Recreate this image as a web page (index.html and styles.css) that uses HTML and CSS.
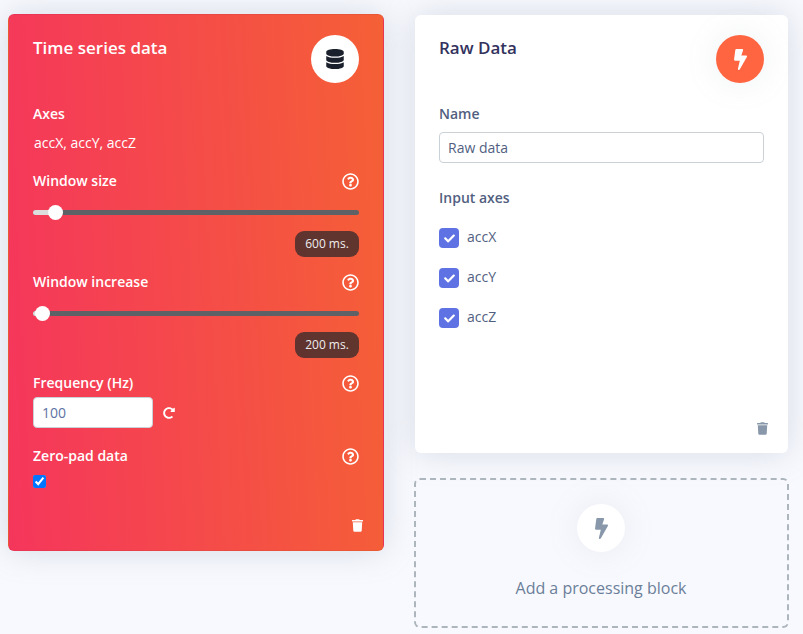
FILE: index.html
```html
<!DOCTYPE html>
<html lang="en">
<head>
    <meta charset="UTF-8">
    <meta name="viewport" content="width=device-width, initial-scale=1.0">
    <title>Impulse design</title>
    <link rel="stylesheet" href="styles.css">
</head>
<body>
    <svg class="icon-defs" width="0" height="0">
        <symbol id="i-database" viewBox="0 0 448 512"><path d="M448 73.143v45.714C448 159.143 347.667 192 224 192S0 159.143 0 118.857V73.143C0 32.857 100.333 0 224 0s224 32.857 224 73.143zM448 176v102.857C448 319.143 347.667 352 224 352S0 319.143 0 278.857V176c48.125 33.143 136.208 48.572 224 48.572S399.874 209.143 448 176zm0 160v102.857C448 479.143 347.667 512 224 512S0 479.143 0 438.857V336c48.125 33.143 136.208 48.572 224 48.572S399.874 369.143 448 336z"/></symbol>
        <symbol id="i-bolt" viewBox="0 0 320 512"><path d="M296 160H180.6l42.6-129.8C227.2 15 215.7 0 200 0H56C44 0 33.8 8.9 32.2 20.8l-32 240C-1.7 275.2 9.5 288 24 288h118.7L96.6 482.5c-3.6 15.2 8 29.5 23.3 29.5 8.4 0 16.4-4.4 20.8-12l176-304c9.3-15.9-2.2-36-20.7-36z"/></symbol>
        <symbol id="i-trash" viewBox="0 0 448 512"><path d="M432 32H312l-9.4-18.7A24 24 0 0 0 281.1 0H166.8a23.72 23.72 0 0 0-21.4 13.3L136 32H16A16 16 0 0 0 0 48v32a16 16 0 0 0 16 16h416a16 16 0 0 0 16-16V48a16 16 0 0 0-16-16zM53.2 467a48 48 0 0 0 47.9 45h245.8a48 48 0 0 0 47.9-45L416 128H32z"/></symbol>
        <symbol id="i-help" viewBox="0 0 512 512"><path d="M256 8C119.043 8 8 119.083 8 256c0 136.997 111.043 248 248 248s248-111.003 248-248C504 119.083 392.957 8 256 8zm0 448c-110.532 0-200-89.431-200-200 0-110.495 89.472-200 200-200 110.491 0 200 89.471 200 200 0 110.53-89.431 200-200 200zm107.244-255.2c0 67.052-72.421 68.084-72.421 92.863V300c0 6.627-5.373 12-12 12h-45.647c-6.627 0-12-5.373-12-12v-8.659c0-35.745 27.1-50.034 47.579-61.516 17.561-9.845 28.324-16.541 28.324-29.579 0-17.246-21.999-28.693-39.784-28.693-23.189 0-33.894 10.977-48.942 29.969-4.057 5.12-11.46 6.071-16.666 2.124l-27.824-21.098c-5.107-3.872-6.251-11.066-2.644-16.363C184.846 131.491 214.94 112 261.794 112c49.071 0 101.45 38.304 101.45 88.8zM298 368c0 23.159-18.841 42-42 42s-42-18.841-42-42 18.841-42 42-42 42 18.841 42 42z"/></symbol>
        <symbol id="i-redo" viewBox="0 0 512 512"><path d="M256.455 8c66.269.119 126.437 26.233 170.859 68.685l35.715-35.715C478.149 25.851 504 36.559 504 57.941V192c0 13.255-10.745 24-24 24H345.941c-21.382 0-32.09-25.851-16.971-40.971l41.75-41.75c-30.864-28.899-70.801-44.907-113.23-45.273-92.398-.798-170.283 73.977-169.484 169.442C88.764 348.009 162.184 424 256 424c41.127 0 79.997-14.678 110.629-41.556 4.743-4.161 11.906-3.908 16.368.553l39.662 39.662c4.872 4.872 4.631 12.815-.482 17.433C378.202 479.813 319.926 504 256 504 119.034 504 8.001 392.967 8 256.002 7.999 119.193 119.646 7.755 256.455 8z"/></symbol>
        <symbol id="i-check" viewBox="0 0 512 512"><path d="M173.898 439.404l-166.4-166.4c-9.997-9.997-9.997-26.206 0-36.204l36.203-36.204c9.997-9.998 26.207-9.998 36.204 0L192 312.69 432.095 72.596c9.997-9.997 26.207-9.997 36.204 0l36.203 36.204c9.997 9.997 9.997 26.206 0 36.204l-294.4 294.401c-9.998 9.997-26.207 9.997-36.204-.001z"/></symbol>
    </svg>

    <div class="page">
        <section class="card card-time">
            <div class="card-head">
                <h2>Time series data</h2>
                <span class="round round-white"><svg class="ic-db"><use href="#i-database"/></svg></span>
            </div>

            <div class="label axes-label">Axes</div>
            <div class="axes-value">accX, accY, accZ</div>

            <div class="label-row row-size">
                <span class="label">Window size</span>
                <svg class="ic-help"><use href="#i-help"/></svg>
            </div>
            <div class="slider">
                <div class="slider-fill fill-size"></div>
                <div class="slider-knob"></div>
            </div>
            <div class="badge-row"><span class="badge">600 ms.</span></div>

            <div class="label-row row-increase">
                <span class="label">Window increase</span>
                <svg class="ic-help"><use href="#i-help"/></svg>
            </div>
            <div class="slider">
                <div class="slider-fill fill-increase"></div>
                <div class="slider-knob"></div>
            </div>
            <div class="badge-row"><span class="badge">200 ms.</span></div>

            <div class="label-row row-increase">
                <span class="label">Frequency (Hz)</span>
                <svg class="ic-help"><use href="#i-help"/></svg>
            </div>
            <div class="freq-row">
                <input class="input input-freq" type="text" value="100">
                <svg class="ic-redo"><use href="#i-redo"/></svg>
            </div>

            <div class="label-row row-zero">
                <span class="label">Zero-pad data</span>
                <svg class="ic-help"><use href="#i-help"/></svg>
            </div>
            <input class="zero-check" type="checkbox" checked>

            <div class="card-foot">
                <svg class="ic-trash"><use href="#i-trash"/></svg>
            </div>
        </section>

        <div class="right-col">
            <section class="card card-raw">
                <div class="card-head">
                    <h2>Raw Data</h2>
                    <span class="round round-orange"><svg class="ic-bolt"><use href="#i-bolt"/></svg></span>
                </div>

                <label class="label name-label" for="blockName">Name</label>
                <input class="input input-name" id="blockName" type="text" value="Raw data">

                <div class="label input-axes">Input axes</div>
                <div class="check-list">
                    <div class="check-item"><span class="check-box"><svg><use href="#i-check"/></svg></span>accX</div>
                    <div class="check-item"><span class="check-box"><svg><use href="#i-check"/></svg></span>accY</div>
                    <div class="check-item"><span class="check-box"><svg><use href="#i-check"/></svg></span>accZ</div>
                </div>

                <div class="card-foot">
                    <svg class="ic-trash ic-trash-grey"><use href="#i-trash"/></svg>
                </div>
            </section>

            <section class="add-block">
                <span class="round round-white round-add"><svg class="ic-bolt"><use href="#i-bolt"/></svg></span>
                <div class="add-text">Add a processing block</div>
            </section>
        </div>
    </div>
</body>
</html>
```

FILE: styles.css
```css
* {
    box-sizing: border-box;
}
html, body {
    height: 100%;
    overflow: hidden;
}
body {
    margin: 0;
    background-color: #f8f9fe;
    font-family: "Open Sans", sans-serif;
    font-size: 14px;
    line-height: 21px;
    color: #525f7f;
}
.icon-defs {
    position: absolute;
}
.page {
    display: grid;
    grid-template-columns: 376px 373px;
    column-gap: 31px;
    align-items: start;
    padding: 14px 0 0 8px;
}
.card {
    display: flex;
    flex-direction: column;
    border-radius: 6px;
    box-shadow: 0 0 32px 0 rgba(136,152,170,0.3);
}
.card-time {
    height: 537px;
    padding: 20px 24px 0;
    border: 1px solid rgba(0,0,0,0.05);
    background: linear-gradient(87deg, #f5365c, #f56036);
    color: #fff;
}
.card-raw {
    height: 438px;
    padding: 20px 24px 0;
    background-color: #fff;
}
.right-col {
    display: flex;
    flex-direction: column;
    gap: 25px;
    padding-top: 1px;
}
.card-head {
    display: flex;
    justify-content: space-between;
    height: 48px;
}
h2 {
    margin: 1px 0 0;
    font-size: 17px;
    line-height: 24px;
    font-weight: 600;
    color: #32325d;
}
.card-time h2 {
    color: #fff;
}
.round {
    display: flex;
    align-items: center;
    justify-content: center;
    flex: none;
    width: 48px;
    height: 48px;
    border-radius: 50%;
}
.round-white {
    background-color: #fff;
}
.round-orange {
    background-color: #ff6540;
    box-shadow: 0 0 32px 0 rgba(136,152,170,0.15);
    fill: #fff;
}
.round-add {
    box-shadow: 0 0 32px 0 rgba(136,152,170,0.15);
    fill: #8898aa;
}
.ic-db {
    width: 18px;
    height: 20px;
    fill: #1a202c;
}
.ic-bolt {
    width: 13px;
    height: 21px;
}
.ic-help {
    width: 17px;
    height: 17px;
    fill: #fff;
}
.ic-redo {
    width: 12px;
    height: 12px;
    margin-left: 10px;
    fill: #fff;
}
.ic-trash {
    width: 11px;
    height: 13px;
    margin-right: -4px;
    fill: #fff;
}
.ic-trash-grey {
    fill: #8898aa;
}
.label {
    font-weight: 600;
}
.label-row .label {
    margin: -1px 0 1px;
}
.axes-label {
    margin-top: 20px;
}
.axes-value {
    margin-top: 8px;
    padding-left: 1px;
}
.label-row {
    display: flex;
    justify-content: space-between;
    align-items: center;
    height: 21px;
}
.row-size {
    margin-top: 18px;
}
.row-increase {
    margin-top: 15px;
}
.row-zero {
    margin-top: 18px;
}
.slider {
    position: relative;
    height: 5px;
    margin-top: 18px;
    border-radius: 3px;
    background-color: #5e6165;
}
.slider-fill {
    height: 100%;
    border-radius: 3px;
    background-color: #ddd;
}
.fill-size {
    width: 22px;
}
.fill-increase {
    width: 9px;
}
.slider-knob {
    position: absolute;
    top: -5px;
    width: 15px;
    height: 15px;
    border-radius: 50%;
    background-color: #fff;
}
.fill-size + .slider-knob {
    left: 15px;
}
.fill-increase + .slider-knob {
    left: 2px;
}
.badge-row {
    display: flex;
    justify-content: flex-end;
    margin-top: 16px;
}
.badge {
    width: 64px;
    height: 26px;
    border-radius: 9px;
    background-color: rgba(33,37,41,0.7);
    color: #eee;
    font-size: 12px;
    line-height: 26px;
    text-align: center;
}
.input {
    border: 1px solid #cad1d7;
    border-radius: 4px;
    background-color: #fff;
    height: 31px;
    padding: 0 8px;
    font-family: inherit;
    font-size: 14px;
    color: #525f7f;
    outline: none;
}
.input-freq {
    width: 120px;
    color: #5e72a4;
}
.freq-row {
    display: flex;
    align-items: center;
    margin-top: 3px;
}
.zero-check {
    display: block;
    width: 13px;
    height: 13px;
    margin: 8px 0 0;
}
.card-foot {
    display: flex;
    justify-content: flex-end;
    margin-top: auto;
    margin-bottom: 18px;
}
.name-label {
    display: block;
    margin-top: 20px;
}
.input-name {
    display: block;
    width: 100%;
    margin-top: 8px;
}
.input-axes {
    margin-top: 24px;
}
.check-list {
    display: flex;
    flex-direction: column;
    gap: 20px;
    margin-top: 20px;
}
.check-item {
    display: flex;
    align-items: flex-start;
    height: 20px;
    gap: 8px;
    line-height: 18px;
}
.check-box {
    display: flex;
    align-items: center;
    justify-content: center;
    width: 20px;
    height: 20px;
    border-radius: 4px;
    background-color: #5e72e4;
}
.check-box svg {
    width: 11px;
    height: 11px;
    fill: #fff;
}
.add-block {
    display: flex;
    flex-direction: column;
    align-items: center;
    height: 150px;
    margin: 0 -1px;
    padding: 24px 1px 0 0;
    border: 2px dashed #adb5bd;
    border-radius: 6px;
}
.add-text {
    margin-top: 24px;
    font-size: 16px;
    line-height: 24px;
    color: #6b7f99;
}
```
